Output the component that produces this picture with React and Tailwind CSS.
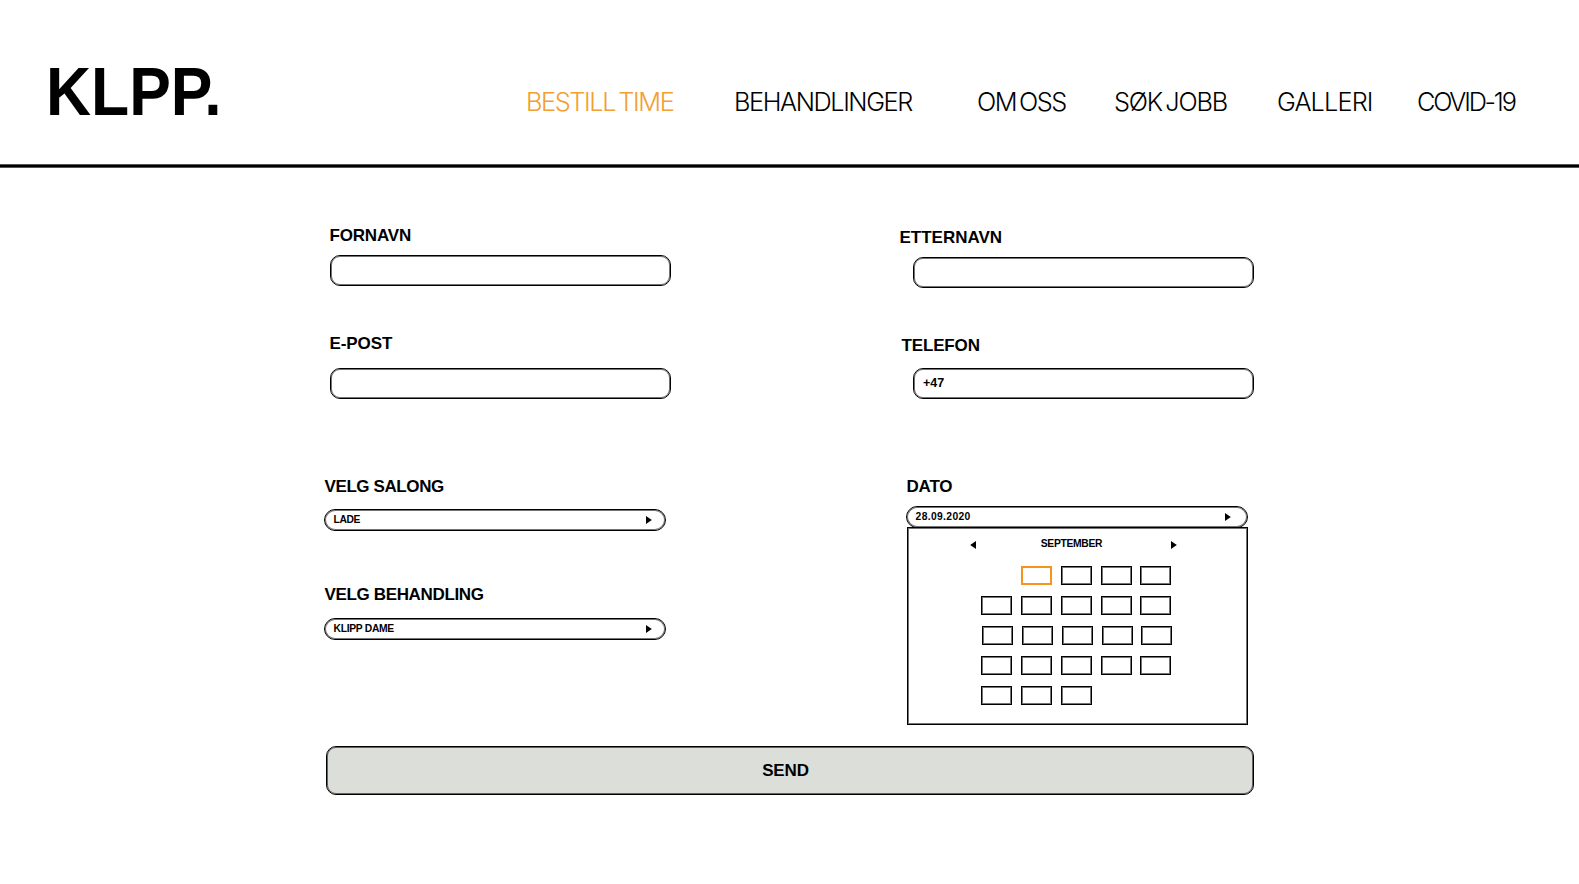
import React from "react";

const stroke = "border border-black shadow-[inset_0_0_0_1px_rgba(0,0,0,0.55)]";

const navItems = [
  { label: "BESTILL TIME", className: "w-[208px] tracking-[-1.38px] text-[#f2a032]" },
  { label: "BEHANDLINGER", className: "w-[243px] tracking-[-1.4px]" },
  { label: "OM OSS", className: "w-[137px] tracking-[-1.5px]" },
  { label: "SØK JOBB", className: "w-[163px] tracking-[-1.2px]" },
  { label: "GALLERI", className: "w-[140px] tracking-[-0.85px]" },
  { label: "COVID-19", className: "tracking-[-2.2px]" },
];

// Each week holds the five weekdays: "none" is an empty slot.
const weeks = [
  ["none", "selected", "day", "day", "day"],
  ["day", "day", "day", "day", "day"],
  ["day", "day", "day", "day", "day"],
  ["day", "day", "day", "day", "day"],
  ["day", "day", "day", "none", "none"],
];

function Label({ className, children }) {
  return (
    <div className={`-mb-px pt-px pl-[0.5px] text-[17px] leading-[12px] font-bold whitespace-nowrap ${className}`}>
      {children}
    </div>
  );
}

function Input({ className, children }) {
  return (
    <div
      className={`flex h-[31px] w-[341px] items-center rounded-[10px] bg-white px-[9px] text-[12.5px] font-bold ${stroke} ${className}`}
    >
      {children}
    </div>
  );
}

function Arrow({ left, className }) {
  return (
    <svg viewBox="0 0 6 8" className={`h-2 w-1.5 shrink-0 ${className}`}>
      <path d={left ? "M6 0 L0.2 4 L6 8 Z" : "M0 0 L5.8 4 L0 8 Z"} />
    </svg>
  );
}

function Select({ className, arrowClass, children }) {
  return (
    <div
      className={`flex h-[22px] w-[342px] items-center justify-between rounded-full bg-white pl-[8.6px] text-[10.3px] leading-none font-bold ${stroke} ${className}`}
    >
      {children}
      <Arrow className={arrowClass} />
    </div>
  );
}

function Day({ kind }) {
  if (kind === "none") return <div className="h-[19px]" />;
  if (kind === "selected") return <div className="h-[19px] border-2 border-[#f7941d]" />;
  return <div className={`h-[19px] ${stroke}`} />;
}

function Calendar() {
  return (
    <div className={`-mt-px ml-[7px] h-[198px] w-[341px] bg-white ${stroke}`}>
      <div className="mt-[12px] ml-[62px] flex h-2 w-[207px] items-center justify-between">
        <Arrow left className="mt-[2px]" />
        <span className="-translate-x-[2px] text-[10.3px] leading-none font-bold tracking-[-0.29px]">
          SEPTEMBER
        </span>
        <Arrow className="mt-[2px]" />
      </div>
      <div className="mt-[18px] ml-[73px] flex flex-col gap-[11px]">
        {weeks.map((days, i) => (
          <div
            key={i}
            className={`grid grid-cols-[31px_31px_31px_31px_31px] gap-x-[9px] ${i === 2 ? "ml-px" : ""}`}
          >
            {days.map((kind, j) => (
              <div key={j} className={j === 4 ? "-ml-px mr-px" : ""}>
                <Day kind={kind} />
              </div>
            ))}
          </div>
        ))}
      </div>
    </div>
  );
}

export default function App() {
  return (
    <div className="h-[884px] w-full overflow-hidden bg-white font-['Liberation_Sans',sans-serif] text-black">
      <header className="flex h-[164px] items-start">
        <h1 className="mt-[68px] ml-[46px] w-[480px] origin-left scale-x-[0.907] text-[68.8px] leading-[47px] font-bold">
          KLPP.
        </h1>
        <nav className="mt-[92px] flex font-['Inter',sans-serif] text-[25.3px] leading-[20px] font-light [word-spacing:-2.5px] whitespace-nowrap">
          {navItems.map((item) => (
            <a key={item.label} className={item.className}>
              {item.label}
            </a>
          ))}
        </nav>
      </header>
      <div className="h-1 bg-[#555] py-px">
        <div className="h-0.5 bg-black" />
      </div>

      <main className="flex flex-col">
        <div className="flex h-[578px] pl-[324px]">
          <section className="w-[576px] pt-[61px]">
            <Label className="ml-[5px] tracking-[-0.17px]">FORNAVN</Label>
            <Input className="mt-[14px] ml-[6px]" />
            <Label className="mt-[51px] ml-[5px] tracking-[-0.1px]">E-POST</Label>
            <Input className="mt-[19px] ml-[6px]" />
            <Label className="mt-[81px] tracking-[-0.4px]">VELG SALONG</Label>
            <Select className="mt-[17px] pr-[13px] tracking-[-0.4px]">LADE</Select>
            <Label className="mt-[57px] tracking-[-0.35px]">VELG BEHANDLING</Label>
            <Select className="mt-[18px] pr-[13px] tracking-[-0.3px]">KLIPP DAME</Select>
          </section>
          <section className="pt-[63px]">
            <Label className="-ml-px">ETTERNAVN</Label>
            <Input className="mt-[14px] ml-[13px]" />
            <Label className="mt-[51px] ml-[1px] tracking-[-0.15px]">TELEFON</Label>
            <Input className="mt-[17px] ml-[13px]">+47</Input>
            <Label className="mt-[81px] ml-[6px] tracking-[-0.2px]">DATO</Label>
            <Select className="mt-[14px] ml-[6px] pr-[16px] tracking-[0.35px]">28.09.2020</Select>
            <Calendar />
          </section>
        </div>
        <button
          className={`ml-[326px] flex h-[49px] w-[928px] items-center justify-center rounded-[10px] bg-[#dcdeda] pr-[9px] text-[17px] font-bold tracking-[-0.13px] ${stroke}`}
        >
          SEND
        </button>
      </main>
    </div>
  );
}
